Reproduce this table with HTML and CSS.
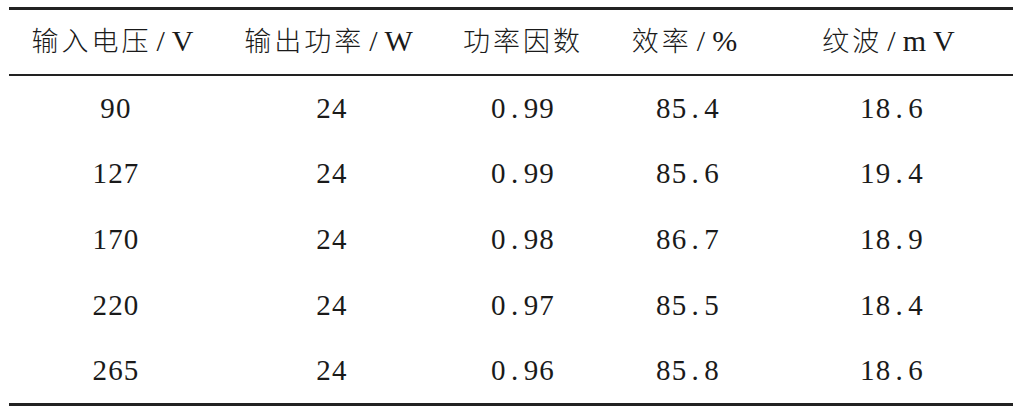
FILE: index.html
```html
<!DOCTYPE html>
<html lang="zh">
<head>
  <meta charset="UTF-8" />
  <title>输入电压与效率</title>
  <link rel="stylesheet" href="styles.css">
</head>
<body>
  <table class="data-table">
    <colgroup>
      <col class="c1"><col class="c2"><col class="c3"><col class="c4"><col class="c5">
    </colgroup>
    <thead>
      <tr>
        <th>输入电压<span class="unit">/V</span></th>
        <th>输出功率<span class="unit">/W</span></th>
        <th>功率因数</th>
        <th>效率<span class="unit">/%</span></th>
        <th>纹波<span class="unit">/mV</span></th>
      </tr>
    </thead>
    <tbody>
      <tr><td>90</td><td>24</td><td>0<span class="dot">.</span>99</td><td>85<span class="dot">.</span>4</td><td>18<span class="dot">.</span>6</td></tr>
      <tr><td>127</td><td>24</td><td>0<span class="dot">.</span>99</td><td>85<span class="dot">.</span>6</td><td>19<span class="dot">.</span>4</td></tr>
      <tr><td>170</td><td>24</td><td>0<span class="dot">.</span>98</td><td>86<span class="dot">.</span>7</td><td>18<span class="dot">.</span>9</td></tr>
      <tr><td>220</td><td>24</td><td>0<span class="dot">.</span>97</td><td>85<span class="dot">.</span>5</td><td>18<span class="dot">.</span>4</td></tr>
      <tr><td>265</td><td>24</td><td>0<span class="dot">.</span>96</td><td>85<span class="dot">.</span>8</td><td>18<span class="dot">.</span>6</td></tr>
    </tbody>
  </table>
</body>
</html>
```

FILE: styles.css
```css
* {
  margin: 0;
  padding: 0;
  box-sizing: border-box;
}

body {
  background: #fff;
  color: #1a1a1a;
  padding: 7px 11px 0 9px;
  font-family: "Liberation Serif", "Noto Sans CJK SC", serif;
}

.data-table {
  width: 1004px;
  border-collapse: collapse;
  table-layout: fixed;
  border-top: 3px solid #222;
  border-bottom: 3px solid #222;
}

.c1 { width: 214px; }
.c2 { width: 218px; }
.c3 { width: 164px; }
.c4 { width: 166px; }
.c5 { width: 242px; }

th {
  height: 66px;
  font-family: "Noto Sans CJK SC", sans-serif;
  font-weight: 300;
  font-size: 27px;
  letter-spacing: 3px;
  border-bottom: 2px solid #222;
  text-align: center;
  vertical-align: middle;
  padding-bottom: 5px;
}

th .unit {
  font-family: "Liberation Serif", serif;
  font-size: 30px;
  letter-spacing: 7px;
  margin-left: 5px;
}

td {
  height: 66px;
  font-size: 29px;
  letter-spacing: 1.2px;
  text-align: center;
  vertical-align: middle;
}

td .dot {
  display: inline-block;
  width: 17px;
}
```
